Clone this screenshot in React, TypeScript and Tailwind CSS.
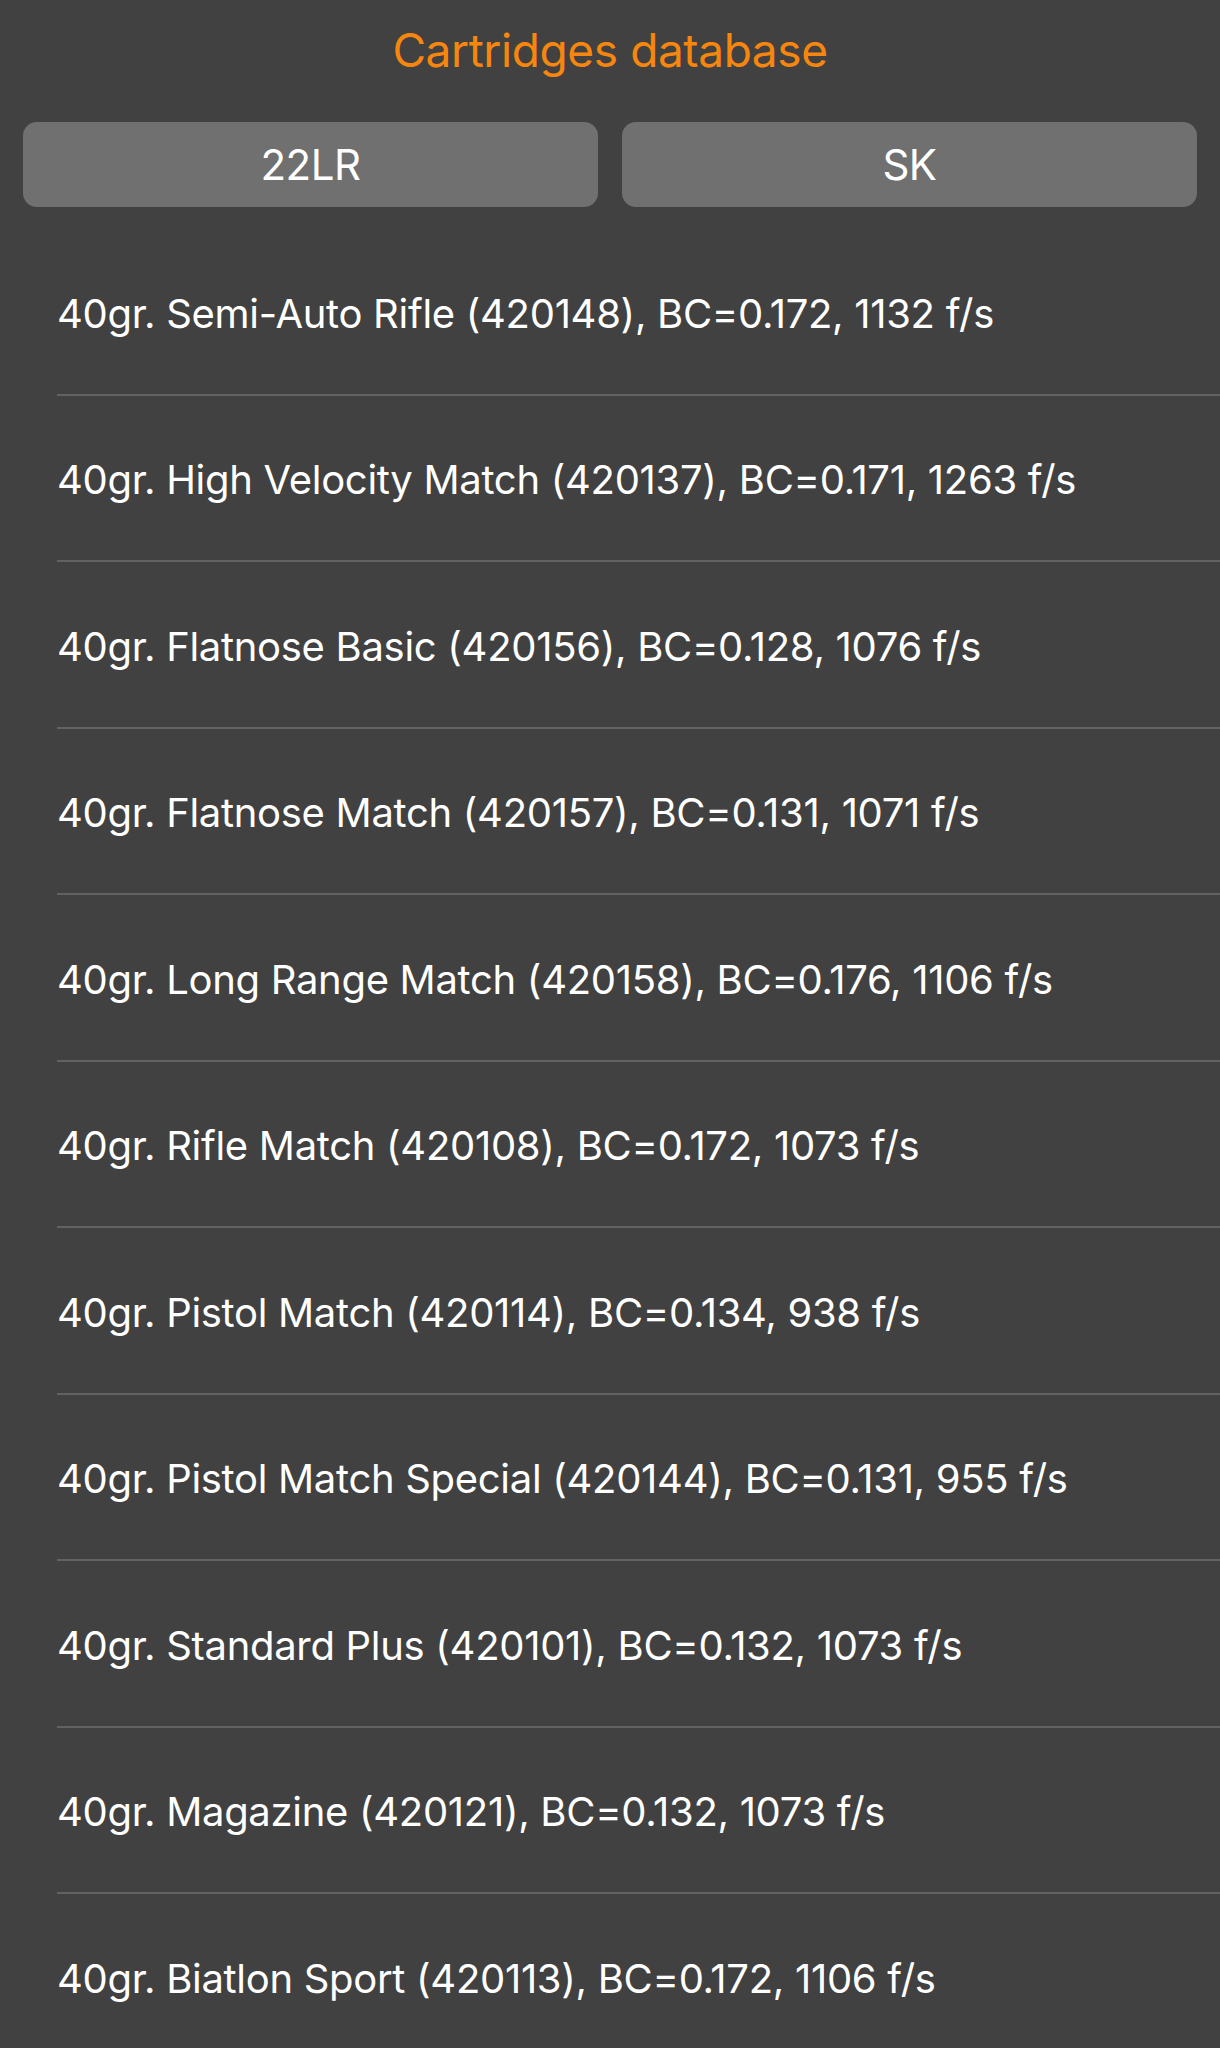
const cartridges = [
  "40gr. Semi-Auto Rifle (420148), BC=0.172, 1132 f/s",
  "40gr. High Velocity Match (420137), BC=0.171, 1263 f/s",
  "40gr. Flatnose Basic (420156), BC=0.128, 1076 f/s",
  "40gr. Flatnose Match (420157), BC=0.131, 1071 f/s",
  "40gr. Long Range Match (420158), BC=0.176, 1106 f/s",
  "40gr. Rifle Match (420108), BC=0.172, 1073 f/s",
  "40gr. Pistol Match (420114), BC=0.134, 938 f/s",
  "40gr. Pistol Match Special (420144), BC=0.131, 955 f/s",
  "40gr. Standard Plus (420101), BC=0.132, 1073 f/s",
  "40gr. Magazine (420121), BC=0.132, 1073 f/s",
  "40gr. Biatlon Sport (420113), BC=0.172, 1106 f/s",
];

const App = () => {
  return (
    <div className="w-[1220px] h-[2048px] overflow-hidden bg-[#414141] font-['Inter',sans-serif] antialiased">
      <h1 className="h-[104px] flex items-center justify-center pb-[4px] text-[46px] text-[#f7860f] tracking-[-0.4px]">
        Cartridges database
      </h1>

      <div className="flex gap-6 px-[23px] pt-[18px]">
        <button className="flex-1 h-[85px] rounded-[14px] bg-[#707070] text-white text-[42px] tracking-[-0.5px]">
          22LR
        </button>
        <button className="flex-1 h-[85px] rounded-[14px] bg-[#707070] text-white text-[42px] tracking-[-0.5px]">
          SK
        </button>
      </div>

      <ul className="mt-[22px] pl-[57px]">
        {cartridges.map((item) => (
          <li
            key={item}
            className="h-[166.5px] flex items-center pt-[5px] border-b-2 border-[#626262] text-white text-[40px] tracking-[-0.3px]"
          >
            {item}
          </li>
        ))}
      </ul>
    </div>
  );
};

export default App;
